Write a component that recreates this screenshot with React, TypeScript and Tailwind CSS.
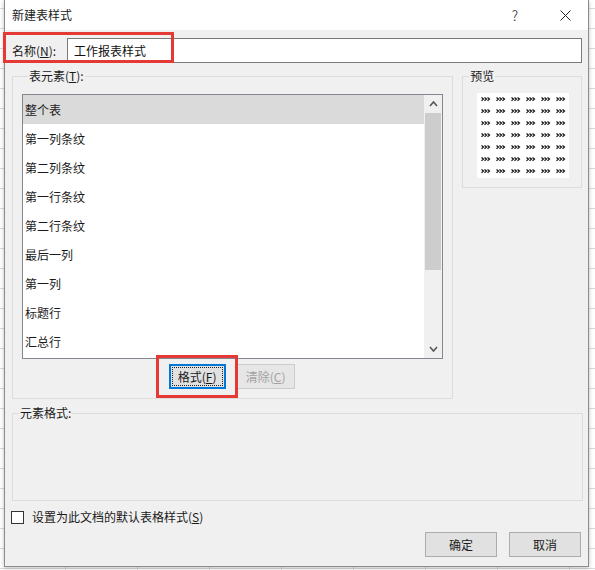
import { ReactNode } from "react";

const font = { fontFamily: '"Noto Sans CJK SC", "Microsoft YaHei", sans-serif' };

const ITEMS = ["整个表", "第一列条纹", "第二列条纹", "第一行条纹", "第二行条纹", "最后一列", "第一列", "标题行", "汇总行"];

function Group({ label, className, children }: { label: ReactNode; className?: string; children?: ReactNode }) {
  return (
    <fieldset className={`border border-[#dcdcdc] ${className ?? ""}`}>
      <legend className="ml-[6px] px-[1px] text-[12px] leading-[16px] text-[#1a1a1a]">{label}</legend>
      {children}
    </fieldset>
  );
}

function Btn({ children, className }: { children: ReactNode; className?: string }) {
  return (
    <div className={`flex items-center justify-center border border-[#adadad] bg-[#e1e1e1] text-[12px] text-[#1a1a1a] ${className ?? ""}`}>
      {children}
    </div>
  );
}

// little "»»»" marks used as placeholder cells in the preview
function PreviewGrid() {
  const marks = [];
  for (let r = 0; r < 7; r++) {
    for (let c = 0; c < 6; c++) {
      const x = 4.5 + c * 15;
      const y = 4.5 + r * 12;
      marks.push(
        <path
          key={`${r}-${c}`}
          d={`M${x} ${y} l2 1.6 l-2 1.6 M${x + 3} ${y} l2 1.6 l-2 1.6 M${x + 6} ${y} l2 1.6 l-2 1.6`}
          stroke="#111"
          strokeWidth="1.2"
          fill="none"
        />
      );
    }
  }
  return (
    <svg width="92" height="85" viewBox="0 0 92 85" className="bg-white">
      {marks}
    </svg>
  );
}

export default function App() {
  return (
    <div
      className="relative h-[570px] w-[595px] overflow-hidden bg-white bg-[linear-gradient(#dadada_1px,transparent_1px),linear-gradient(90deg,#dadada_1px,transparent_1px)] bg-[size:72px_20px] bg-[position:65px_8px]"
      style={font}
    >
      <div className="ml-[4px] flex h-[567px] w-[585px] flex-col border-x border-b border-[#8c8c8c] bg-[#f0f0f0] shadow-[0_1px_4px_rgba(0,0,0,0.25)]">
        {/* title bar */}
        <div className="flex h-[30px] shrink-0 items-center bg-white pl-[7px] text-[12px] text-[#1a1a1a]">
          <span>新建表样式</span>
          <span className="ml-auto mr-[42px] text-[14px] font-light">?</span>
          <svg width="11" height="11" viewBox="0 0 11 11" className="mr-[17px]">
            <path d="M0.5 0.5 L10.5 10.5 M10.5 0.5 L0.5 10.5" stroke="#222" strokeWidth="1" />
          </svg>
        </div>

        <div className="flex flex-1 flex-col pl-[7px] pr-[6px]">
          {/* name row */}
          <div className="mt-[8px] flex h-[25px] items-center">
            <span className="w-[55px] text-[12px] text-[#1a1a1a]">
              名称(<u>N</u>):
            </span>
            <div className="flex h-[25px] flex-1 items-center border border-[#7a7a7a] bg-white pl-[6px] text-[12px] text-[#111]">
              工作报表样式
            </div>
          </div>

          <div className="mt-[5px] flex gap-[9px]">
            <Group label={<>表元素(<u>T</u>):</>} className="h-[331px] w-[442px] px-[9px]">
              <div className="mt-[10px] flex h-[265px] border border-[#828790] bg-white">
                <div className="flex flex-1 flex-col">
                  {ITEMS.map((t, i) => (
                    <div
                      key={t}
                      className={`flex h-[29px] shrink-0 items-center pl-[2px] text-[12px] text-[#1a1a1a] ${i === 0 ? "bg-[#dadada]" : ""}`}
                    >
                      {t}
                    </div>
                  ))}
                </div>
                <div className="flex w-[18px] flex-col items-center bg-[#f0f0f0]">
                  <svg width="9" height="18" viewBox="0 0 9 18" className="shrink-0">
                    <path d="M1 11 L4.5 7 L8 11" stroke="#555" strokeWidth="1.5" fill="none" />
                  </svg>
                  <div className="h-[157px] w-[16px] bg-[#cdcdcd]" />
                  <div className="flex-1" />
                  <svg width="9" height="18" viewBox="0 0 9 18" className="shrink-0">
                    <path d="M1 7 L4.5 11 L8 7" stroke="#555" strokeWidth="1.5" fill="none" />
                  </svg>
                </div>
              </div>

              <div className="mt-[5px] flex justify-center gap-[11px] pr-[2px]">
                <div className="flex h-[25px] w-[57px] items-center justify-center border-2 border-[#0078d7] bg-[#e1e1e1] p-[1px]">
                  <div className="flex h-full w-full items-center justify-center border border-dotted border-[#222] text-[12px] text-[#1a1a1a]">
                    格式(<u>F</u>)
                  </div>
                </div>
                <div className="flex h-[25px] w-[58px] items-center justify-center border border-[#cccccc] bg-[#e6e6e6] text-[12px] text-[#a3a3a3]">
                  清除(<u>C</u>)
                </div>
              </div>
            </Group>

            <Group label="预览" className="h-[120px] w-[120px]">
              <div className="mt-[9px] flex justify-center pl-[2px]">
                <PreviewGrid />
              </div>
            </Group>
          </div>

          <Group label="元素格式:" className="mt-[6px] h-[96px] w-[571px]" />

          <div className="mt-[7px] flex items-center">
            <div className="ml-[-1px] h-[13px] w-[13px] border border-[#333] bg-white" />
            <span className="ml-[8px] text-[12px] text-[#1a1a1a]">
              设置为此文档的默认表格样式(<u>S</u>)
            </span>
          </div>

          <div className="mt-[6px] flex justify-end gap-[12px] pr-[1px]">
            <Btn className="h-[25px] w-[72px]">确定</Btn>
            <Btn className="h-[25px] w-[72px]">取消</Btn>
          </div>
        </div>
      </div>

      {/* red highlight marks */}
      <div className="pointer-events-none absolute left-[3px] top-[32px] h-[31px] w-[171px] border-[3px] border-[#e53935]" />
      <div className="pointer-events-none absolute left-[156px] top-[355px] h-[43px] w-[82px] border-[3px] border-[#e53935]" />
    </div>
  );
}
